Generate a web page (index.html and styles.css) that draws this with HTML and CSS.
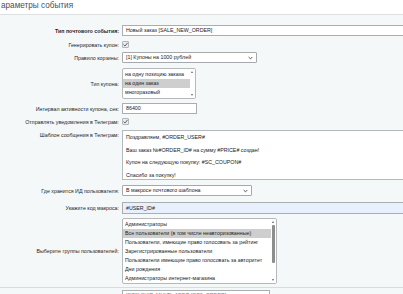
FILE: index.html
```html
<!DOCTYPE html>
<html lang="ru">
<head>
<meta charset="utf-8">
<link rel="stylesheet" href="styles.css">
</head>
<body>
<div class="page">
  <div class="head"><h1 class="title">араметры события</h1></div>
  <div class="form">
    <div class="row r1">
      <div class="label bold">Тип почтового события:</div>
      <div class="ctl"><div class="input wide">Новый заказ [SALE_NEW_ORDER]</div></div>
    </div>
    <div class="row r2">
      <div class="label">Генерировать купон:</div>
      <div class="ctl"><span class="check"><svg viewBox="0 0 7 7" width="7" height="7"><path d="M1.5 3.6 L3 5 L5.6 1.8" fill="none" stroke="#555" stroke-width="0.9"/></svg></span></div>
    </div>
    <div class="row r3">
      <div class="label">Правило корзины:</div>
      <div class="ctl"><div class="input select w135">[1] Купоны на 1000 рублей<svg class="chev" viewBox="0 0 6 4" width="5" height="4"><path d="M0.8 0.8 L3 3 L5.2 0.8" fill="none" stroke="#333" stroke-width="1"/></svg></div></div>
    </div>
    <div class="row r4">
      <div class="label">Тип купона:</div>
      <div class="ctl">
        <div class="listbox lb1">
          <div class="opts">
            <div class="opt">на одну позицию заказа</div>
            <div class="opt sel">на один заказ</div>
            <div class="opt">многоразовый</div>
          </div>
          <div class="sbar"><span class="up"></span><span class="dn"></span></div>
        </div>
      </div>
    </div>
    <div class="row r5">
      <div class="label">Интервал активности купона, сек:</div>
      <div class="ctl"><div class="input w74">86400</div></div>
    </div>
    <div class="row r6">
      <div class="label">Отправлять уведомления в Телеграм:</div>
      <div class="ctl"><span class="check"><svg viewBox="0 0 7 7" width="7" height="7"><path d="M1.5 3.6 L3 5 L5.6 1.8" fill="none" stroke="#555" stroke-width="0.9"/></svg></span></div>
    </div>
    <div class="row r7">
      <div class="label top">Шаблон сообщения в Телеграм:</div>
      <div class="ctl">
        <div class="textarea wide">
          <div class="tl">Поздравляем, #ORDER_USER#</div>
          <div class="tl">Ваш заказ №#ORDER_ID# на сумму #PRICE# создан!</div>
          <div class="tl">Купон на следующую покупку: #SC_COUPON#</div>
          <div class="tl">Спасибо за покупку!</div>
        </div>
      </div>
    </div>
    <div class="row r8">
      <div class="label">Где хранится ИД пользователя:</div>
      <div class="ctl"><div class="input select w130">В макросе почтового шаблона<svg class="chev" viewBox="0 0 6 4" width="5" height="4"><path d="M0.8 0.8 L3 3 L5.2 0.8" fill="none" stroke="#333" stroke-width="1"/></svg></div></div>
    </div>
    <div class="row r9">
      <div class="label">Укажите код макроса:</div>
      <div class="ctl"><div class="input wide auto">#USER_ID#</div></div>
    </div>
    <div class="row r10">
      <div class="label">Выберите группы пользователей:</div>
      <div class="ctl">
        <div class="listbox lb2">
          <div class="opts">
            <div class="opt">Администраторы</div>
            <div class="opt sel">Все пользователи (в том числе неавторизованные)</div>
            <div class="opt">Пользователи, имеющие право голосовать за рейтинг</div>
            <div class="opt">Зарегистрированные пользователи</div>
            <div class="opt">Пользователи имеющие право голосовать за авторитет</div>
            <div class="opt">Дни рождения</div>
            <div class="opt">Администраторы интернет-магазина</div>
          </div>
          <div class="sbar"><span class="up"></span><span class="thumb"></span><span class="dn"></span></div>
        </div>
      </div>
    </div>
    <div class="row r11">
      <div class="label"></div>
      <div class="ctl"><div class="input w148 faded">[SC3] SHIP_MULTI_ADDR [SC3_ORDER]</div></div>
    </div>
  </div>
</div>
</body>
</html>
```

FILE: styles.css
```css
* { box-sizing: border-box; }
html, body { margin: 0; padding: 0; }
body {
  width: 403px;
  height: 294px;
  overflow: hidden;
  background: #f5f8f9;
  font-family: "Liberation Sans", Arial, sans-serif;
  color: #222;
}
.page { width: 403px; }
.head {
  background: #fff;
  height: 15px;
  border-bottom: 1px solid #dde1e3;
}
.title {
  margin: 0;
  padding: 1px 0 0 1px;
  font-size: 8.2px;
  font-weight: normal;
  line-height: 9px;
  color: #4a5257;
}
.form { padding-top: 10px; }
.row {
  display: flex;
  align-items: center;
}
.label {
  width: 119px;
  flex: none;
  text-align: right;
  font-size: 5.3px;
  color: #1f1f1f;
  white-space: nowrap;
  margin-right: 3px;
}
.label.bold { font-weight: bold; }
.label.top { align-self: flex-start; padding-top: 2px; }
.ctl { flex: none; display: flex; align-items: center; }
.r1 { margin-top: 0; }
.r2 { margin-top: 3px; height: 11px; }
.r3 { margin-top: 2px; }
.r4 { margin-top: 5px; }
.r5 { margin-top: 4px; }
.r6 { margin-top: 2px; height: 11px; }
.r7 { margin-top: 3px; }
.r8 { margin-top: 5px; }
.r9 { margin-top: 6px; }
.r10 { margin-top: 4px; }
.r11 { margin-top: 3px; border-top: 1px solid #d9dcdd; padding-top: 2px; }

.input {
  height: 11px;
  border: 1px solid #a9aeb1;
  background: #fff;
  font-size: 5.3px;
  line-height: 9px;
  padding: 0 3px;
  color: #222;
  white-space: nowrap;
  overflow: hidden;
  position: relative;
}
.wide { width: 300px; }
.w135 { width: 135px; }
.w130 { width: 130px; }
.w74 { width: 75px; }
.w148 { width: 148px; }
.auto { background: #e8f0fe; height: 12px; line-height: 10px; }
.faded { color: #777; }
.select { border-color: #a5a9ac; border-radius: 1px; }
.chev { position: absolute; right: 3px; top: 3px; }

.check {
  width: 7px;
  height: 7px;
  border: 1px solid #b3b7ba;
  border-radius: 1px;
  background: #e9ecee;
  display: block;
  position: relative;
}
.check svg { position: absolute; left: -1px; top: -1px; }

.listbox {
  border: 1px solid #b5b9bc;
  border-radius: 2px;
  background: #fff;
  display: flex;
  overflow: hidden;
}
.lb1 { width: 74px; height: 31px; }
.lb2 { width: 155px; height: 66px; }
.opts { flex: 1; padding-top: 1px; overflow: hidden; }
.opt {
  font-size: 5.3px;
  height: 9px;
  line-height: 9px;
  padding-left: 2px;
  white-space: nowrap;
  color: #222;
}
.opt.sel { background: #cecece; }
.sbar {
  width: 5px;
  flex: none;
  position: relative;
  background: #fff;
}
.up, .dn {
  position: absolute;
  left: 1px;
  width: 0; height: 0;
  border-left: 1.5px solid transparent;
  border-right: 1.5px solid transparent;
}
.up { top: 2px; border-bottom: 2px solid #666; }
.dn { bottom: 2px; border-top: 2px solid #666; }
.thumb {
  position: absolute;
  left: 1px;
  top: 6px;
  width: 3px;
  height: 38px;
  background: #8d8d8d;
  border-radius: 1px;
}

.textarea {
  height: 50px;
  border: 1px solid #b5b9bc;
  background: #fff;
  padding: 3px 3px 0;
}
.tl {
  font-size: 5.3px;
  height: 12.5px;
  line-height: 6px;
  white-space: nowrap;
  color: #222;
}
```
